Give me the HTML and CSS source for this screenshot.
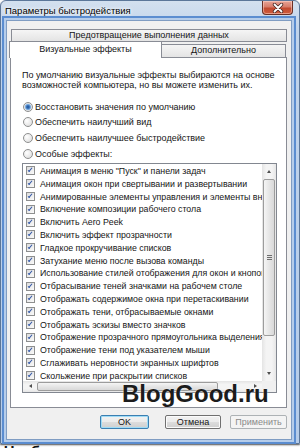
FILE: index.html
```html
<!DOCTYPE html>
<html lang="ru">
<head>
  <meta charset="UTF-8" />
  <meta name="viewport" content="width=device-width, initial-scale=1" />
  <title>Параметры быстродействия</title>
  <link rel="stylesheet" href="styles.css">
</head>
<body>
  <div class="window">
    <div class="titlebar">
      <span class="title">Параметры быстродействия</span>
      <button class="close">
        <svg width="12" height="10" viewBox="0 0 12 10">
          <path d="M2.5 1.5 L9.5 8.5 M9.5 1.5 L2.5 8.5" stroke="#4a2a26" stroke-width="3.4" stroke-linecap="round" />
          <path d="M2.5 1.5 L9.5 8.5 M9.5 1.5 L2.5 8.5" stroke="#fff" stroke-width="1.8" stroke-linecap="round" />
        </svg>
      </button>
    </div>

    <div class="client">
      <div class="tab tab-top">Предотвращение выполнения данных</div>
      <div class="tab-row">
        <div class="tab tab-active">Визуальные эффекты</div>
        <div class="tab tab-side">Дополнительно</div>
      </div>

      <div class="panel">
        <p class="intro">По умолчанию визуальные эффекты выбираются на основе<br>возможностей компьютера, но вы можете изменить их.</p>

        <ul class="radios">
          <li><span class="radio checked"></span>Восстановить значения по умолчанию</li>
          <li><span class="radio"></span>Обеспечить наилучший вид</li>
          <li><span class="radio"></span>Обеспечить наилучшее быстродействие</li>
          <li><span class="radio"></span>Особые эффекты:</li>
        </ul>

        <div class="listbox">
          <ul class="items">
            <li><span class="cb"></span>Анимация в меню "Пуск" и панели задач</li>
            <li><span class="cb"></span>Анимация окон при свертывании и развертывании</li>
            <li><span class="cb"></span>Анимированные элементы управления и элементы внутри окна</li>
            <li><span class="cb"></span>Включение композиции рабочего стола</li>
            <li><span class="cb"></span>Включить Aero Peek</li>
            <li><span class="cb"></span>Включить эффект прозрачности</li>
            <li><span class="cb"></span>Гладкое прокручивание списков</li>
            <li><span class="cb"></span>Затухание меню после вызова команды</li>
            <li><span class="cb"></span>Использование стилей отображения для окон и кнопок</li>
            <li><span class="cb"></span>Отбрасывание теней значками на рабочем столе</li>
            <li><span class="cb"></span>Отображать содержимое окна при перетаскивании</li>
            <li><span class="cb"></span>Отображать тени, отбрасываемые окнами</li>
            <li><span class="cb"></span>Отображать эскизы вместо значков</li>
            <li><span class="cb"></span>Отображение прозрачного прямоугольника выделения</li>
            <li><span class="cb"></span>Отображение тени под указателем мыши</li>
            <li><span class="cb"></span>Сглаживать неровности экранных шрифтов</li>
            <li><span class="cb"></span>Скольжение при раскрытии списков</li>
          </ul>

          <!-- вертикальная полоса прокрутки -->
          <div class="vscroll">
            <div class="sb-btn"><span class="arrow up"></span></div>
            <div class="vthumb"><span class="grip"></span></div>
            <div class="sb-fill"></div>
            <div class="sb-btn"><span class="arrow down"></span></div>
          </div>

          <!-- горизонтальная полоса прокрутки -->
          <div class="hscroll">
            <div class="sb-btn"><span class="arrow left"></span></div>
            <div class="hthumb"></div>
            <div class="sb-fill"></div>
            <div class="sb-btn"><span class="arrow right"></span></div>
          </div>
          <div class="corner"></div>
        </div>
      </div>

      <div class="buttons">
        <button class="btn btn-ok">OK</button>
        <button class="btn btn-cancel">Отмена</button>
        <button class="btn btn-apply" disabled>Применить</button>
      </div>
    </div>

    <div class="watermark">BlogGood.ru</div>
  </div>

  <div class="page-below">Чтобы изменения вступили в силу</div>
</body>
</html>
```

FILE: styles.css
```css
*, *::before, *::after { box-sizing: border-box; }
html, body { margin: 0; }
body {
  width: 300px;
  height: 448px;
  overflow: hidden;
  background: #fff;
  font-family: 'Liberation Sans', Arial, sans-serif;
  font-size: 9px;
  color: #151515;
}
ul { margin: 0; padding: 0; list-style: none; }
button { font-family: inherit; font-size: inherit; padding: 0; }

/* Окно */
.window {
  position: relative;
  height: 444px;
  display: flex;
  flex-direction: column;
  padding-bottom: 4px;
  background: linear-gradient(#d3e0ef, #c1d4eb 30px, #b5cce9);
  border: 1px solid #5b7699;
  border-radius: 6px 6px 0 0;
  box-shadow: 0 1px 2px rgba(0,0,0,0.7);
}
.titlebar {
  height: 20px;
  display: flex;
  align-items: flex-start;
  padding-left: 4px;
}
.title {
  margin-top: 4px;
  font-size: 9.5px;
  line-height: 11px;
  color: #000;
  text-shadow: 0 0 5px #fff, 0 0 3px #fff;
}
.close {
  margin-left: auto;
  margin-right: 6px;
  width: 31px;
  height: 14px;
  display: flex;
  align-items: center;
  justify-content: center;
  border: 1px solid #6a2f25;
  border-top: none;
  border-radius: 0 0 4px 4px;
  background: linear-gradient(#e8a497 0, #d77d6b 45%, #c24a31 55%, #cf5c3c 100%);
  box-shadow: inset 0 0 0 1px rgba(255,220,210,0.5);
}

.client {
  flex: 1;
  margin: 0 8px 0 6px;
  padding: 8px 4px 0 3px;
  background: #f0f0f0;
  box-shadow: 0 0 0 1px #7f9cc2, 0 0 0 3px #b6cdea, 0 0 0 5px #5b8dd0;
}

/* Вкладки */
.tab {
  border: 1px solid #898c95;
  background: linear-gradient(#f5f5f5, #e4e4e4);
  text-align: center;
  line-height: 11px;
  color: #151515;
}
.tab-top {
  margin-left: 1px;
  height: 13px;
}
.tab-row {
  display: flex;
  align-items: flex-start;
  height: 15px;
}
.tab-active {
  position: relative;
  z-index: 1;
  width: 153px;
  height: 17px;
  margin: -1px 0 0 -1px;
  padding-top: 2px;
  background: #fff;
  border-bottom: none;
}
.tab-side {
  flex: 1;
  height: 13px;
  margin: 2px 1px 0 0;
  border-left: none;
  border-bottom: none;
}

.panel {
  height: 351px;
  padding: 12px 9px 0 11px;
  background: #fff;
  border: 1px solid #898c95;
}
.intro {
  margin: 0;
  line-height: 10px;
}
.radios {
  margin-top: 9px;
}
.radios li {
  height: 15.6px;
  display: flex;
  align-items: center;
}
.radio {
  width: 10px;
  height: 10px;
  margin: 0 2px 0 1px;
  border: 1px solid #8e8f8f;
  border-radius: 50%;
  background: radial-gradient(circle at 35% 35%, #fff, #e4e4e4 70%, #d2d2d2);
}
.radio.checked {
  background: radial-gradient(circle at 50% 50%, #1c4b8e 0, #3f78bd 1.6px, #9cc3ea 3px, #e8e8e8 3.6px, #dadada);
}

/* Список с флажками */
.listbox {
  margin-top: 1.6px;
  height: 230px;
  display: grid;
  grid-template-columns: 1fr 14px;
  grid-template-rows: 1fr 11px;
  border: 1px solid #828790;
}
.items {
  overflow: hidden;
  padding-top: 0.6px;
  font-size: 8.8px;
}
.items li {
  height: 12.8px;
  display: flex;
  align-items: center;
  white-space: nowrap;
}
.cb {
  position: relative;
  flex: none;
  width: 9px;
  height: 9px;
  margin: 0 5px 0 3px;
  border: 1px solid #8e8f8f;
  background: linear-gradient(135deg, #dcdcdc, #fbfbfb);
}
.cb::after {
  content: '';
  position: absolute;
  left: 2.2px;
  top: 0;
  width: 2.4px;
  height: 5px;
  border-right: 1.5px solid #3056a6;
  border-bottom: 1.5px solid #3056a6;
  transform: rotate(40deg);
}

.vscroll {
  display: flex;
  flex-direction: column;
  background: linear-gradient(to right, #e4e4e4, #f4f4f4 30%, #f4f4f4 70%, #e6e6e6);
}
.hscroll {
  display: flex;
  background: linear-gradient(#e4e4e4, #f4f4f4 30%, #f4f4f4 70%, #e6e6e6);
}
.corner { background: #f0f0f0; }
.sb-btn {
  flex: none;
  display: flex;
  align-items: center;
  justify-content: center;
}
.vscroll .sb-btn { height: 15px; }
.hscroll .sb-btn { width: 14px; }
.sb-fill { flex: 1; }
.arrow {
  width: 0;
  height: 0;
  border: 2.5px solid transparent;
}
.arrow.up { border-bottom: 3px solid #4f4f4f; border-top: none; }
.arrow.down { border-top: 3px solid #4f4f4f; border-bottom: none; }
.arrow.left { border-right: 3px solid #4f4f4f; border-left: none; }
.arrow.right { border-left: 3px solid #4f4f4f; border-right: none; }

.vthumb {
  height: 157px;
  margin: 0 1px;
  display: flex;
  align-items: center;
  justify-content: center;
  border: 1px solid #9c9c9c;
  border-radius: 2px;
  background: linear-gradient(to right, #f5f5f5, #e6e6e6 50%, #d9d9d9);
}
.grip {
  width: 5px;
  height: 5px;
  background: repeating-linear-gradient(#6d6d6d 0, #6d6d6d 1px, transparent 1px, transparent 2px);
}
.hthumb {
  width: 181px;
  margin: 1px 0;
  border: 1px solid #9c9c9c;
  border-radius: 2px;
  background: linear-gradient(#f5f5f5, #e6e6e6 50%, #d9d9d9);
}

/* Кнопки диалога */
.buttons {
  display: flex;
  justify-content: flex-end;
  margin-top: 7px;
}
.btn {
  height: 14px;
  line-height: 12px;
  color: #151515;
  border: 1px solid #707070;
  border-radius: 2px;
  background: linear-gradient(#f2f2f2 0, #ebebeb 50%, #dddddd 50%, #cfcfcf 100%);
  box-shadow: inset 0 0 0 1px #fbfbfb;
}
.btn-ok {
  width: 49px;
  border-color: #3c7fb1;
  box-shadow: inset 0 0 0 1px #9fdcf7;
}
.btn-cancel {
  width: 56px;
  margin-left: 16px;
}
.btn-apply {
  width: 57px;
  margin-left: 9px;
  color: #8a8a8a;
  border-color: #adb2b5;
  background: #f4f4f4;
  box-shadow: none;
}

.watermark {
  position: absolute;
  left: 121px;
  top: 381px;
  font-size: 24px;
  line-height: 24px;
  font-weight: bold;
  color: #1c1c1c;
  text-shadow: 0 0 2px rgba(255,255,255,0.7);
}

.page-below {
  margin-top: -1px;
  padding-left: 4px;
  font-size: 15px;
  line-height: 15px;
  font-weight: bold;
  color: #111;
  white-space: nowrap;
}
```
